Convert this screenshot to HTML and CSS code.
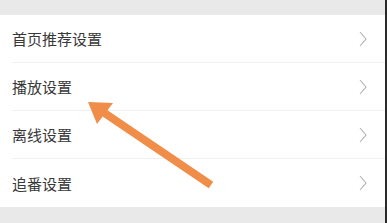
FILE: index.html
```html
<!DOCTYPE html>
<html>
<head>
<meta charset="utf-8">
<link rel="stylesheet" href="styles.css">
</head>
<body>
<div class="page">
  <div class="list">
    <div class="row"><span class="label">首页推荐设置</span><svg class="chev" width="8" height="16" viewBox="0 0 8 16"><path d="M1 1 L7 8 L1 15" fill="none" stroke="#b0b0b0" stroke-width="1.1"/></svg></div>
    <div class="row"><span class="label">播放设置</span><svg class="chev" width="8" height="16" viewBox="0 0 8 16"><path d="M1 1 L7 8 L1 15" fill="none" stroke="#b0b0b0" stroke-width="1.1"/></svg></div>
    <div class="row"><span class="label">离线设置</span><svg class="chev" width="8" height="16" viewBox="0 0 8 16"><path d="M1 1 L7 8 L1 15" fill="none" stroke="#b0b0b0" stroke-width="1.1"/></svg></div>
    <div class="row last"><span class="label">追番设置</span><svg class="chev" width="8" height="16" viewBox="0 0 8 16"><path d="M1 1 L7 8 L1 15" fill="none" stroke="#b0b0b0" stroke-width="1.1"/></svg></div>
  </div>
  <svg class="arrow" width="387" height="223" viewBox="0 0 387 223">
    <line x1="211" y1="185" x2="103" y2="112" stroke="#f08d48" stroke-width="8"/>
    <polygon points="88,102 113,103 97,124" fill="#f08d48"/>
  </svg>
</div>
</body>
</html>
```
FILE: styles.css
```css
html, body {
  margin: 0;
  padding: 0;
}
body {
  width: 387px;
  height: 223px;
  overflow: hidden;
  font-family: "Noto Sans CJK SC", "Noto Sans", sans-serif;
}
.page {
  position: relative;
  width: 387px;
  height: 223px;
  background: #e9e9e9;
  border-right: 2px solid #2a2a2a;
  padding-top: 15px;
  box-sizing: border-box;
}
.list {
  background: #ffffff;
}
.row {
  height: 48px;
  margin-left: 12px;
  padding-right: 18px;
  display: flex;
  align-items: center;
  justify-content: space-between;
  border-bottom: 1px solid #f0f0f0;
  box-sizing: border-box;
}
.row.last {
  border-bottom: none;
}
.label {
  font-size: 15px;
  color: #383838;
  line-height: 1;
}
.chev {
  display: block;
}
.arrow {
  position: absolute;
  left: 0;
  top: 0;
}
```
